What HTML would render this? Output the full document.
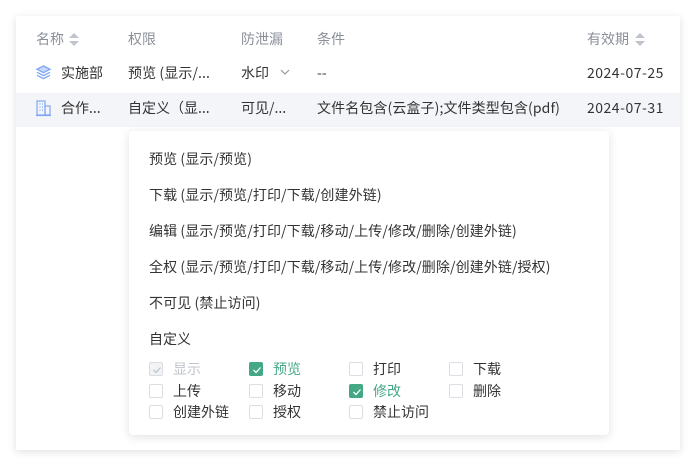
<!DOCTYPE html>
<html><head><meta charset="utf-8"><style>
*{margin:0;padding:0;box-sizing:border-box}
body{width:696px;height:467px;background:#fff;font-family:"Noto Sans CJK SC","Liberation Sans",sans-serif;font-size:14px;color:#333;position:relative;overflow:hidden}
.card{position:absolute;left:16px;top:16px;width:664px;height:434px;background:#fff;box-shadow:0 2px 8px rgba(0,0,0,.12)}
.t{position:absolute;white-space:nowrap;line-height:20px}
.h{color:#8a8f99}
.d{letter-spacing:0.5px}
.w{letter-spacing:0.1px}
.row2{position:absolute;left:16px;top:93px;width:664px;height:34px;background:#f4f5f9}
.sort{position:absolute;width:10px;height:14px}
.sort:before{content:"";position:absolute;left:0;top:0;border:5px solid transparent;border-bottom:5px solid #c0c4cc;border-top:0}
.sort:after{content:"";position:absolute;left:0;top:8px;border:5px solid transparent;border-top:5px solid #c0c4cc;border-bottom:0}
.dd{position:absolute;left:129px;top:131px;width:480px;height:304px;background:#fff;border-radius:4px;box-shadow:0 2px 10px rgba(0,0,0,.12)}
.cb{position:absolute;width:14px;height:14px;border:1px solid #dcdde3;border-radius:2px;background:#fff}
.cb.on{background:#45a884;border-color:#45a884}
.cb.dis{background:#f2f3f5;border-color:#dcdde3}
.cb svg{position:absolute;left:1px;top:1px}
.g{color:#45a884}
</style></head><body>
<div class="card"></div>
<div class="row2"></div>
<div class="t h" style="left:36px;top:29px">名称</div><div class="sort" style="left:69px;top:33px"></div>
<div class="t h" style="left:128px;top:29px">权限</div>
<div class="t h" style="left:241px;top:29px">防泄漏</div>
<div class="t h" style="left:317px;top:29px">条件</div>
<div class="t h" style="left:587px;top:29px">有效期</div><div class="sort" style="left:635px;top:33px"></div>

<svg style="position:absolute;left:35px;top:64px" width="17" height="17" viewBox="0 0 17 17" fill="none" stroke="#7ea6f5" stroke-width="1.3"><path d="M8.5 2L15 5.3 8.5 8.6 2 5.3z" fill="#c9d9fb"/><path d="M2 8.3l6.5 3.3 6.5-3.3"/><path d="M2 11.3l6.5 3.3 6.5-3.3"/></svg>
<div class="t" style="left:61px;top:63px">实施部</div>
<div class="t w" style="left:128px;top:63px">预览 (显示/...</div>
<div class="t" style="left:241px;top:63px">水印</div>
<svg style="position:absolute;left:280px;top:69px" width="10" height="7" viewBox="0 0 10 7" fill="none" stroke="#999" stroke-width="1.2"><path d="M1 1l4 4 4-4"/></svg>
<div class="t" style="left:317px;top:63px">--</div>
<div class="t d" style="left:587px;top:63px">2024-07-25</div>

<svg style="position:absolute;left:35px;top:99px" width="17" height="18" viewBox="0 0 17 18" fill="none" stroke="#7ea6f5" stroke-width="1.2"><rect x="2" y="2" width="8" height="14"/><rect x="10" y="7" width="5" height="9"/><path d="M1 16.5h15" /><path d="M4.5 5h1M7 5h1M4.5 8h1M7 8h1M4.5 11h1M7 11h1"/></svg>
<div class="t" style="left:61px;top:98px">合作...</div>
<div class="t" style="left:128px;top:98px">自定义（显...</div>
<div class="t" style="left:241px;top:98px">可见/...</div>
<div class="t w" style="left:317px;top:98px">文件名包含(云盒子);文件类型包含(pdf)</div>
<div class="t d" style="left:587px;top:98px">2024-07-31</div>

<div class="dd"></div>
<div class="t w" style="left:149px;top:149px">预览 (显示/预览)</div>
<div class="t w" style="left:149px;top:185px">下载 (显示/预览/打印/下载/创建外链)</div>
<div class="t w" style="left:149px;top:221px">编辑 (显示/预览/打印/下载/移动/上传/修改/删除/创建外链)</div>
<div class="t w" style="left:149px;top:257px">全权 (显示/预览/打印/下载/移动/上传/修改/删除/创建外链/授权)</div>
<div class="t w" style="left:149px;top:293px">不可见 (禁止访问)</div>
<div class="t" style="left:149px;top:329px">自定义</div>

<div class="cb dis" style="left:149px;top:362px"><svg width="12" height="12" viewBox="0 0 12 12" fill="none" stroke="#c0c4cc" stroke-width="1.3"><path d="M2.5 6l2.5 2.5 4.5-5"/></svg></div><div class="t" style="left:173px;top:359px;color:#c0c4cc">显示</div>
<div class="cb on" style="left:249px;top:362px"><svg width="12" height="12" viewBox="0 0 12 12" fill="none" stroke="#fff" stroke-width="1.3"><path d="M2.5 6l2.5 2.5 4.5-5"/></svg></div><div class="t g" style="left:273px;top:359px">预览</div>
<div class="cb" style="left:349px;top:362px"></div><div class="t" style="left:373px;top:359px">打印</div>
<div class="cb" style="left:449px;top:362px"></div><div class="t" style="left:473px;top:359px">下载</div>

<div class="cb" style="left:149px;top:384px"></div><div class="t" style="left:173px;top:381px">上传</div>
<div class="cb" style="left:249px;top:384px"></div><div class="t" style="left:273px;top:381px">移动</div>
<div class="cb on" style="left:349px;top:384px"><svg width="12" height="12" viewBox="0 0 12 12" fill="none" stroke="#fff" stroke-width="1.3"><path d="M2.5 6l2.5 2.5 4.5-5"/></svg></div><div class="t g" style="left:373px;top:381px">修改</div>
<div class="cb" style="left:449px;top:384px"></div><div class="t" style="left:473px;top:381px">删除</div>

<div class="cb" style="left:149px;top:405px"></div><div class="t" style="left:173px;top:402px">创建外链</div>
<div class="cb" style="left:249px;top:405px"></div><div class="t" style="left:273px;top:402px">授权</div>
<div class="cb" style="left:349px;top:405px"></div><div class="t" style="left:373px;top:402px">禁止访问</div>
</body></html>
